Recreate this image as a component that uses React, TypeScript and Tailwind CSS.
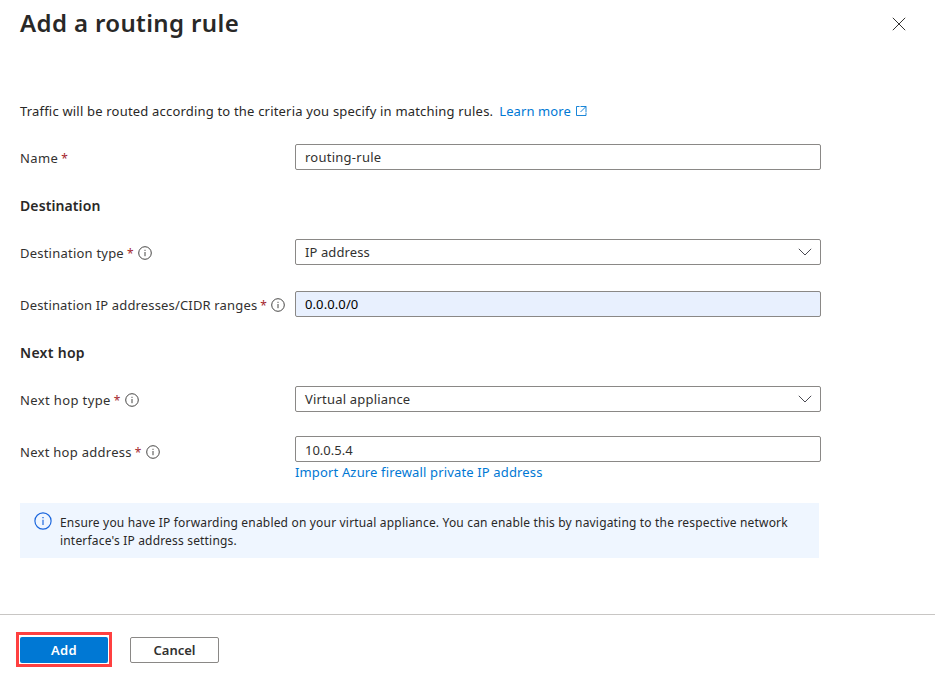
import type { ReactNode } from "react";

function InfoIcon({ className }: { className: string }) {
  return (
    <svg viewBox="0 0 14 14" fill="none" stroke="currentColor" className={className}>
      <circle cx="7" cy="7" r="6.3" strokeWidth="0.9" />
      <path d="M7 6v4.2" strokeWidth="0.9" />
      <path d="M7 3.8v1" strokeWidth="1" />
    </svg>
  );
}

function Chevron() {
  return (
    <svg viewBox="0 0 14 8" fill="none" stroke="#4a4a52" strokeWidth="1" className="h-2 w-3.5">
      <path d="M0.8 0.8 7 7l6.2-6.2" />
    </svg>
  );
}

function Row({ label, spacing, info, low, children }: { label: string; spacing: string; info?: boolean; low?: boolean; children: ReactNode }) {
  return (
    <div className="flex h-[26px]">
      <div className={`flex w-[275px] shrink-0 items-center text-[#323130] ${low ? "pt-1.5" : "pt-0.5"}`}>
        <span className={`whitespace-nowrap ${spacing}`}>{label}</span>
        <span className="ml-[3px] w-[7px] pt-px text-[12px] text-[#a4262c]">*</span>
        {info && <InfoIcon className="ml-1 size-3.5 shrink-0 text-[#323130]" />}
      </div>
      {children}
    </div>
  );
}

function Field({ value, spacing, select, filled }: { value: string; spacing: string; select?: boolean; filled?: boolean }) {
  return (
    <div
      className={`flex h-[26px] w-[526px] shrink-0 items-center justify-between rounded-[2px] border border-[#8a8886] pr-2 pl-[9px] ${
        filled ? "bg-[#e8f0fe] text-black" : "bg-white text-[#323130]"
      }`}
    >
      <span className={spacing}>{value}</span>
      {select && <Chevron />}
    </div>
  );
}

export default function App() {
  return (
    <main className="flex h-[678px] w-[935px] flex-col overflow-hidden bg-white font-['Noto_Sans','Open_Sans',sans-serif] text-[13px] leading-[18px] text-[#292827]">
      <header className="flex h-[102px] items-start justify-between pr-[29px] pl-5">
        <h1 className="pt-[7px] text-[24px] leading-8 font-semibold tracking-[0.37px]">Add a routing rule</h1>
        <svg viewBox="0 0 14 14" stroke="#323130" strokeWidth="1" className="mt-[17px] size-3.5">
          <path d="m0.8 0.8 12.4 12.4M13.2 0.8 0.8 13.2" />
        </svg>
      </header>

      <section className="flex h-[512px] shrink-0 flex-col pl-5">
        <p className="flex h-[18px] items-center whitespace-nowrap">
          <span className="tracking-[0.19px]">Traffic will be routed according to the criteria you specify in matching rules.</span>
          <a className="ml-1.5 flex items-center text-[#0078d4]">
            <span className="tracking-[0.1px]">Learn more</span>
            <svg viewBox="0 0 12 12" fill="none" stroke="currentColor" strokeWidth="0.9" className="ml-1 size-3">
              <path d="M4.5 1.5h-3v9h9.5V7.5M5.5 1.5H11V7M11 1.5 5.5 7" />
            </svg>
          </a>
        </p>
        <div className="mt-6">
          <Row label="Name" spacing="tracking-[0.4px]">
            <Field value="routing-rule" spacing="tracking-[0.25px]" />
          </Row>
        </div>
        <h2 className="mt-[26px] text-[14px] leading-5 font-semibold tracking-[0.1px]">Destination</h2>
        <div className="mt-[23px] flex flex-col gap-[26px]">
          <Row label="Destination type" spacing="tracking-[0.22px]" info>
            <Field value="IP address" spacing="tracking-[0.1px]" select />
          </Row>
          <Row label="Destination IP addresses/CIDR ranges" spacing="tracking-[0.16px]" info>
            <Field value="0.0.0.0/0" spacing="tracking-[0.1px]" filled />
          </Row>
        </div>
        <h2 className="mt-[26px] text-[14px] leading-5 font-semibold tracking-[0.3px]">Next hop</h2>
        <div className="mt-[23px] flex flex-col gap-6">
          <Row label="Next hop type" spacing="tracking-[0.38px]" info>
            <Field value="Virtual appliance" spacing="tracking-[0.19px]" select />
          </Row>
          <Row label="Next hop address" spacing="tracking-[0.28px]" info low>
            <Field value="10.0.5.4" spacing="pt-0.5 tracking-normal" />
          </Row>
        </div>
        <a className="mt-px ml-[275px] tracking-[0.15px] text-[#0078d4]">Import Azure firewall private IP address</a>
        <div className="mt-[22px] flex h-[55px] w-[799px] bg-[#eff6ff] pt-[9px] pl-3.5">
          <InfoIcon className="size-[18px] shrink-0 text-[#1a66dd]" />
          <p className="mt-0.5 ml-2 text-[12px] leading-[18px] tracking-[0.18px] whitespace-nowrap">
            Ensure you have IP forwarding enabled on your virtual appliance. You can enable this by navigating to the respective network
            <br />
            interface's IP address settings.
          </p>
        </div>
      </section>

      <footer className="flex h-16 items-start border-t border-[#c8c6c4] pt-[17px] pl-4 font-semibold">
        <div className="border-[3px] border-[#ff4040] px-px pt-0.5 pb-px">
          <button className="flex h-[26px] w-[88px] items-center justify-center rounded-[2px] bg-[#0078d4] tracking-[0.3px] text-white">Add</button>
        </div>
        <button className="mt-[5px] ml-[18px] flex h-[26px] w-[89px] items-center justify-center rounded-[2px] border border-[#8a8886] text-[#323130]">
          Cancel
        </button>
      </footer>
    </main>
  );
}
